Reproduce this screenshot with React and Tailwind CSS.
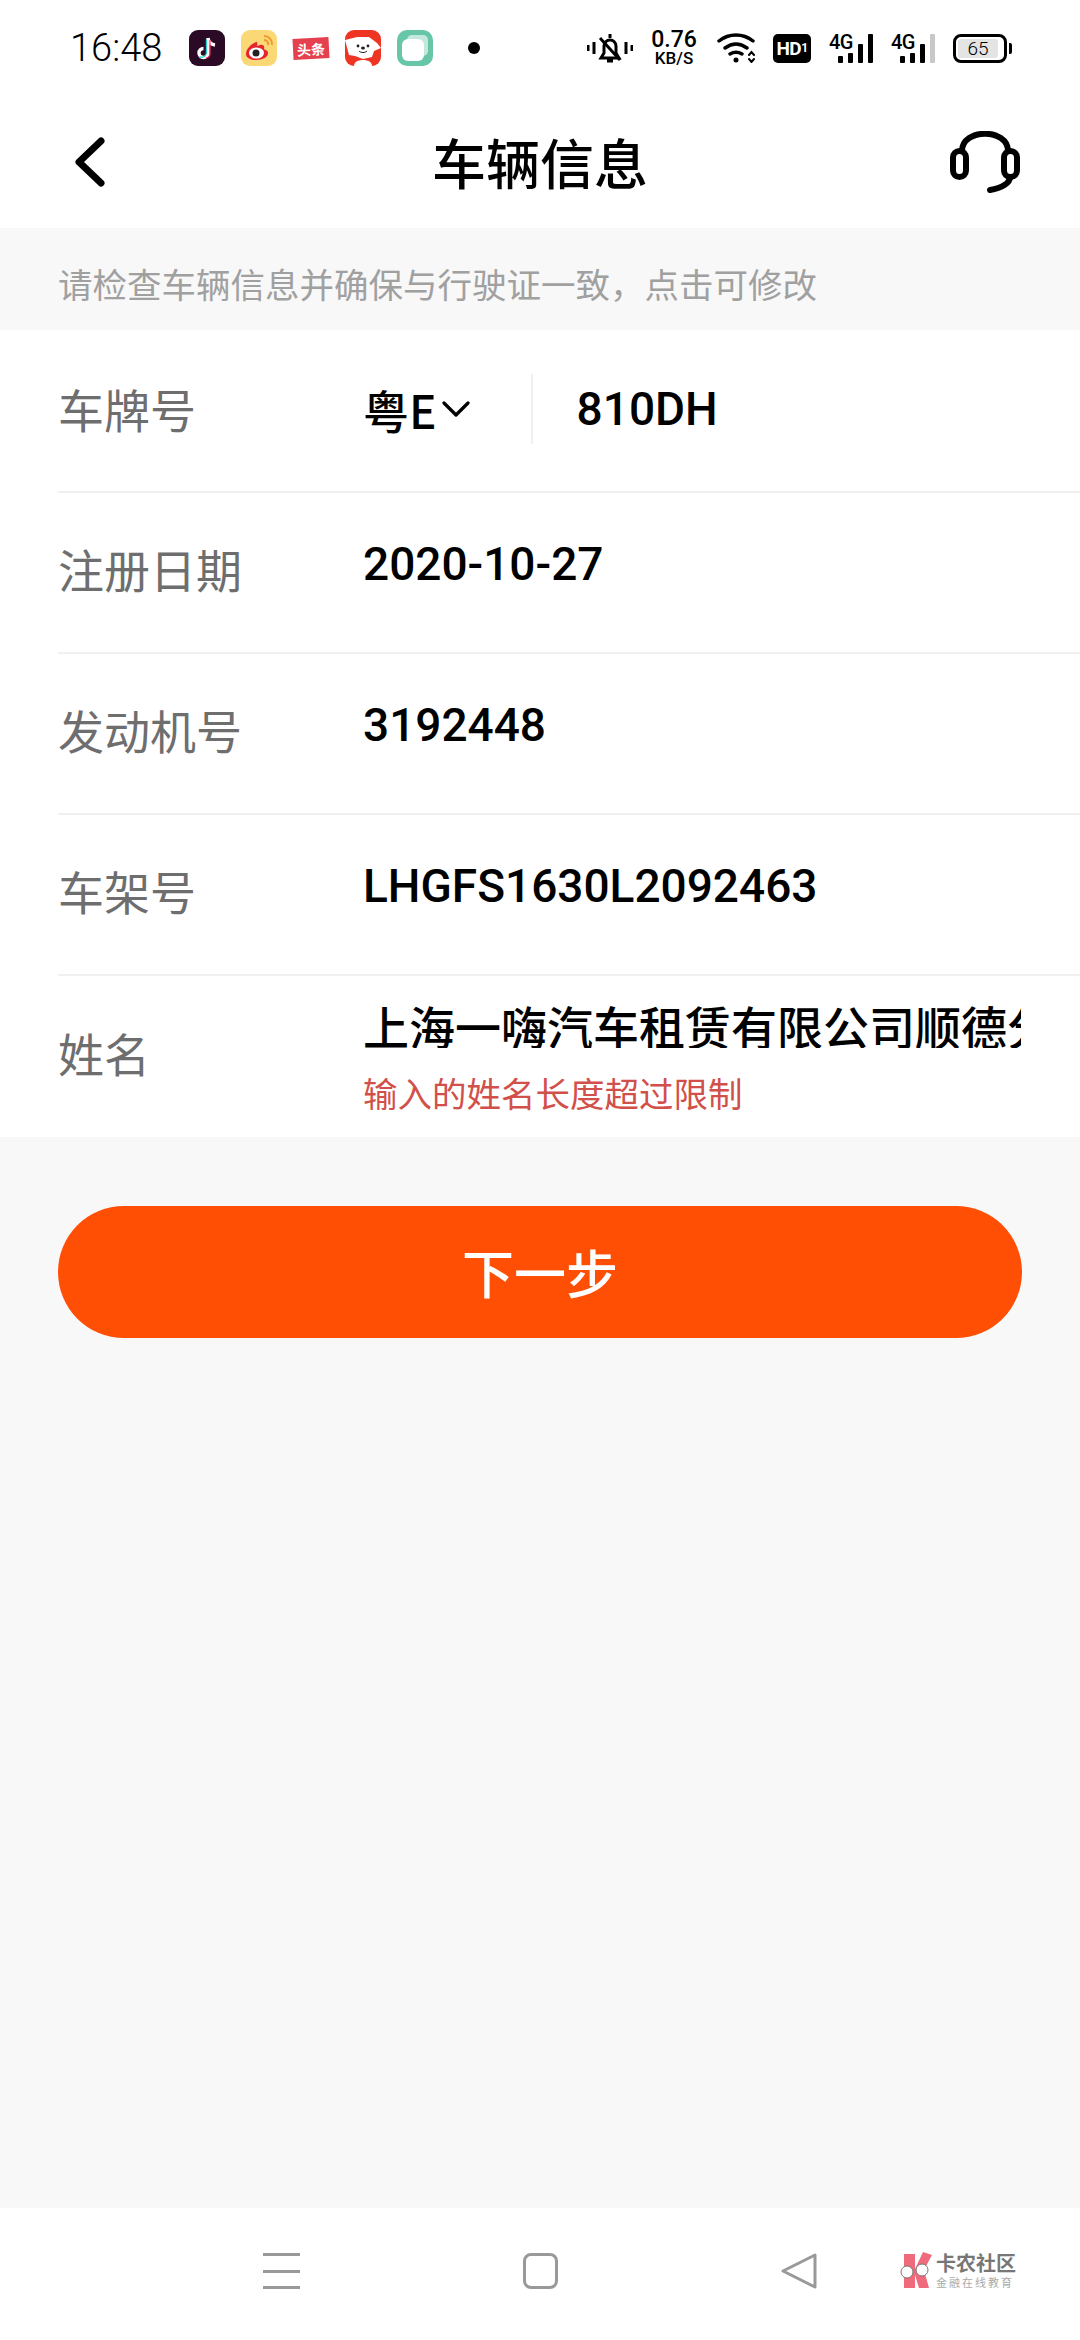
import React from "react";

const cjk = "font-['Noto_Sans_CJK_SC','Noto_Sans',sans-serif]";
const latin = "font-['Roboto','Noto_Sans_CJK_SC',sans-serif]";

function AppIcons() {
  return (
    <div className="ml-[28px] flex items-center gap-[16px]">
      {/* douyin */}
      <svg width="36" height="36" viewBox="0 0 36 36">
        <rect width="36" height="36" rx="9" fill="#2a0a24" />
        <path d="M19 8v15a4.5 4.5 0 1 1-4.5-4.5M19 8c.5 4 3 6.5 7 7" fill="none" stroke="#fff" strokeWidth="3.4" />
        <path d="M17.4 9.5v13.5a4.5 4.5 0 0 1-7 3.4" fill="none" stroke="#25d4d0" strokeWidth="1.2" />
        <path d="M21 10v13.500a4.500 4.500 0 0 1-4 4.400" fill="none" stroke="#f0325a" strokeWidth="1.2" />
      </svg>
      {/* weibo */}
      <svg width="36" height="36" viewBox="0 0 36 36">
        <rect width="36" height="36" rx="9" fill="#fbd876" />
        <path d="M15 12c-5 2-10 7-10 12 0 4 5 6 10 6 7 0 12-3 12-7 0-3-3-3-4-4 1-3-1-5-4-4l-3 1c1-3-.500-5-1-4z" fill="#e6262e" />
        <ellipse cx="15.500" cy="23" rx="7.500" ry="5.500" fill="#fff" />
        <circle cx="15" cy="23" r="3.500" fill="#222" />
        <path d="M23 6a8 8 0 0 1 8 9M23 10a4 4 0 0 1 4 5" fill="none" stroke="#ee9a2c" strokeWidth="2" />
      </svg>
      {/* toutiao */}
      <div className="flex h-[36px] w-[36px] items-center justify-center">
        <div className={`flex h-[21px] w-[36px] -rotate-3 items-center justify-center bg-[#e4404f] text-[14px] leading-none font-bold text-white ${cjk}`}>
          头条
        </div>
      </div>
      {/* red bear */}
      <svg width="36" height="36" viewBox="0 0 36 36">
        <rect width="36" height="36" rx="9" fill="#ee3524" />
        <path d="M0 10 12 7h12l8 6 4 5-7 3-2 6-9 2-8-3-6-1z" fill="#fff" />
        <path d="M9 36c0-4 4-6 9-6s9 2 9 6z" fill="#fff" />
        <circle cx="13" cy="16" r="1.400" fill="#222" />
        <circle cx="23" cy="16" r="1.400" fill="#222" />
        <ellipse cx="18" cy="18" rx="2" ry="1.500" fill="#222" />
        <path d="M14 21c2 2 6 2 8 0" fill="none" stroke="#222" strokeWidth="1" />
      </svg>
      {/* green chat */}
      <svg width="36" height="36" viewBox="0 0 36 36">
        <rect width="36" height="36" rx="10" fill="#67c6a8" />
        <rect x="10" y="5" width="21" height="21" rx="5" fill="#c4e9dc" />
        <rect x="5" y="9" width="22" height="22" rx="6" fill="#fff" />
      </svg>
      <div className="ml-[19px] h-[12px] w-[12px] rounded-full bg-black" />
    </div>
  );
}

// 4G label sits over the two short bars
function Cell({ dim }) {
  return (
    <div className="relative flex h-[29px] w-[44px] items-end justify-end gap-[5px]">
      <span className={`absolute -top-[1px] left-0 text-[20px] leading-[18px] font-medium tracking-[-0.5px] text-black ${latin}`}>4G</span>
      <div className="h-[7px] w-[5px] rounded-[1px] bg-black" />
      <div className="h-[10px] w-[5px] rounded-[1px] bg-black" />
      <div className="h-[19px] w-[5px] rounded-[1px] bg-black" />
      <div className={`h-[29px] w-[5px] rounded-[1px] ${dim ? "bg-[#c8c8c8]" : "bg-black"}`} />
    </div>
  );
}

function SystemIcons() {
  return (
    <div className="flex items-center">
      <svg width="46" height="32" viewBox="0 0 46 32" fill="none" stroke="#000" strokeWidth="3">
        <path d="M1 13v6M7 10v12M39 10v12M45 13v6" />
        <path d="M14 26h18l-3-5v-7a6 6 0 0 0-12 0v7zM20 29h6M23 2v4" />
        <path d="M13 6l20 22" />
      </svg>
      <div className={`ml-[18px] flex w-[46px] flex-col items-center text-black ${latin}`}>
        <span className="text-[23px] leading-[20px] font-medium">0.76</span>
        <span className="text-[17px] leading-[17px] font-medium">KB/S</span>
      </div>
      <svg className="ml-[20px]" width="40" height="30" viewBox="0 0 40 30" fill="none" stroke="#000" strokeWidth="3.400" strokeLinecap="round">
        <path d="M2 8c10-8 24-8 34 0M8 15c7-5 15-5 22 0M13 21c3.500-2 8.500-2 12 0" />
        <circle cx="19" cy="27" r="1.500" fill="#000" strokeWidth="2" />
        <path d="M32 22l2.500-3 2.500 3M32 26l2.500 3 2.500-3" strokeWidth="2" />
      </svg>
      <div className={`ml-[16px] flex h-[29px] w-[38px] items-center justify-center rounded-[5px] bg-black text-[19px] leading-none font-bold tracking-[-0.5px] text-white ${latin}`}>
        HD<span className="text-[12px]">1</span>
      </div>
      <div className="ml-[18px]">
        <Cell />
      </div>
      <div className="ml-[18px]">
        <Cell dim />
      </div>
      <div className="ml-[18px] flex items-center">
        <div className="flex h-[29px] w-[54px] items-center rounded-[8px] border-[3px] border-black p-[2px]">
          <div className={`flex h-full w-[40px] items-center justify-center rounded-[3px] bg-[#e4e4e4] text-[19px] leading-none font-light text-black ${latin}`}>
            65
          </div>
        </div>
        <div className="ml-[2px] h-[11px] w-[3px] rounded-r-[2px] bg-black" />
      </div>
    </div>
  );
}

function Row({ label, children, last, className = "h-[161px]", labelClass = "pb-[10px]", valueClass = "" }) {
  return (
    <div className={`ml-[58px] flex items-center ${className} ${last ? "" : "border-b-2 border-[#f0f0f0]"}`}>
      <div className={`w-[305px] shrink-0 text-[46px] leading-none text-[#6e6e6e] ${labelClass} ${cjk}`}>{label}</div>
      <div className={`min-w-0 flex-1 ${valueClass}`}>{children}</div>
    </div>
  );
}

function Value({ children }) {
  return <div className={`-mt-[18px] text-[46px] leading-none font-medium text-black ${latin}`}>{children}</div>;
}

export default function App() {
  return (
    <div className="flex h-[2340px] w-[1080px] flex-col overflow-hidden bg-[#f8f8f8]">
      {/* status bar */}
      <div className="flex h-[96px] items-center justify-between bg-white pr-[68px] pl-[70px]">
        <div className="flex items-center">
          <span className={`w-[91px] text-[38px] leading-none font-light text-black ${latin}`}>16:48</span>
          <AppIcons />
        </div>
        <SystemIcons />
      </div>

      {/* title bar */}
      <div className="flex h-[132px] items-center bg-white pr-[60px] pl-[72px]">
        <div className="flex-1">
          <svg width="34" height="50" viewBox="0 0 34 50" fill="none" stroke="#000" strokeWidth="7" strokeLinecap="round" strokeLinejoin="round">
            <path d="M29 4 7 25l22 21" />
          </svg>
        </div>
        <div className={`pr-[12px] text-[54px] leading-none font-medium text-black ${cjk}`}>车辆信息</div>
        <div className="flex flex-1 justify-end">
          <svg width="70" height="62" viewBox="0 0 70 62" fill="none" stroke="#000" strokeWidth="6" strokeLinecap="round">
            <path d="M12 20C12 -3 58 -3 58 20" />
            <rect x="3" y="20" width="13" height="26" rx="6.500" />
            <rect x="54" y="20" width="13" height="26" rx="6.500" />
            <path d="M60 46c0 6-8 11-20 13" />
          </svg>
        </div>
      </div>

      {/* hint */}
      <div className={`flex h-[102px] items-center pt-[8px] pl-[58px] text-[34.500px] leading-none text-[#a0a0a0] ${cjk}`}>
        请检查车辆信息并确保与行驶证一致，点击可修改
      </div>

      {/* form */}
      <div className="bg-white">
        <Row label="车牌号" className="h-[163px]" labelClass="pb-[6px]">
          <div className={`-mt-[4px] flex items-center text-black ${latin}`}>
            <span className={`text-[46px] leading-none font-medium ${cjk}`}>粤E</span>
            <svg className="ml-[5px]" width="28" height="16" viewBox="0 0 28 16" fill="none" stroke="#000" strokeWidth="3.200" strokeLinecap="round" strokeLinejoin="round">
              <path d="M2 2l12 12L26 2" />
            </svg>
            <div className="ml-[61px] h-[70px] w-[2px] bg-[#f0f0f0]" />
            <span className="ml-[44px] text-[46px] leading-none font-medium">810DH</span>
          </div>
        </Row>
        <Row label="注册日期">
          <Value>2020-10-27</Value>
        </Row>
        <Row label="发动机号">
          <Value>3192448</Value>
        </Row>
        <Row label="车架号">
          <Value>LHGFS1630L2092463</Value>
        </Row>
        <Row label="姓名" last valueClass="pr-[59px]">
          <div className={`-mt-[2px] overflow-hidden text-[46px] leading-none font-medium whitespace-nowrap text-black ${cjk}`}>
            上海一嗨汽车租赁有限公司顺德分公司
          </div>
          <div className={`mt-[27px] text-[34.500px] leading-none text-[#d2504a] ${cjk}`}>输入的姓名长度超过限制</div>
        </Row>
      </div>

      {/* next button */}
      <div className="mt-[69px] px-[58px]">
        <button className={`flex h-[132px] w-full items-center justify-center rounded-full bg-[#ff4f04] text-[52px] leading-none font-medium text-white ${cjk}`}>
          下一步
        </button>
      </div>

      <div className="flex-1" />

      {/* navigation bar */}
      <div className="relative flex h-[132px] items-center bg-white pb-[6px] pl-[263px]">
        <div className="flex h-[36px] w-[37px] flex-col justify-between">
          <div className="h-[3px] bg-[#999]" />
          <div className="h-[3px] bg-[#999]" />
          <div className="h-[3px] bg-[#999]" />
        </div>
        <div className="ml-[223px] h-[36px] w-[35px] rounded-[8px] border-[3px] border-[#999]" />
        <svg className="ml-[223px]" width="36" height="36" viewBox="0 0 36 36" fill="none" stroke="#999" strokeWidth="3" strokeLinejoin="round">
          <path d="M34 2v32L2 18z" />
        </svg>
        {/* watermark */}
        <div className="absolute top-[44px] left-[900px] flex items-center">
          <svg width="34" height="36" viewBox="0 0 34 36">
            <path d="M4 2h11v15l8-17 9 3-8 15 5 18-10 0-4-13v13H4z" fill="#ee6a7c" />
            <circle cx="7" cy="20" r="6" fill="#fff" stroke="#777" strokeWidth="1" />
            <circle cx="22" cy="18" r="6" fill="#fff" stroke="#777" strokeWidth="1" />
          </svg>
          <div className={`ml-[2px] flex flex-col ${cjk}`}>
            <span className="text-[20px] leading-[22px] font-bold text-[#777]">卡农社区</span>
            <span className="mt-[2px] text-[11px] leading-[12px] tracking-[2px] text-[#aaa]">金融在线教育</span>
          </div>
        </div>
      </div>
    </div>
  );
}
